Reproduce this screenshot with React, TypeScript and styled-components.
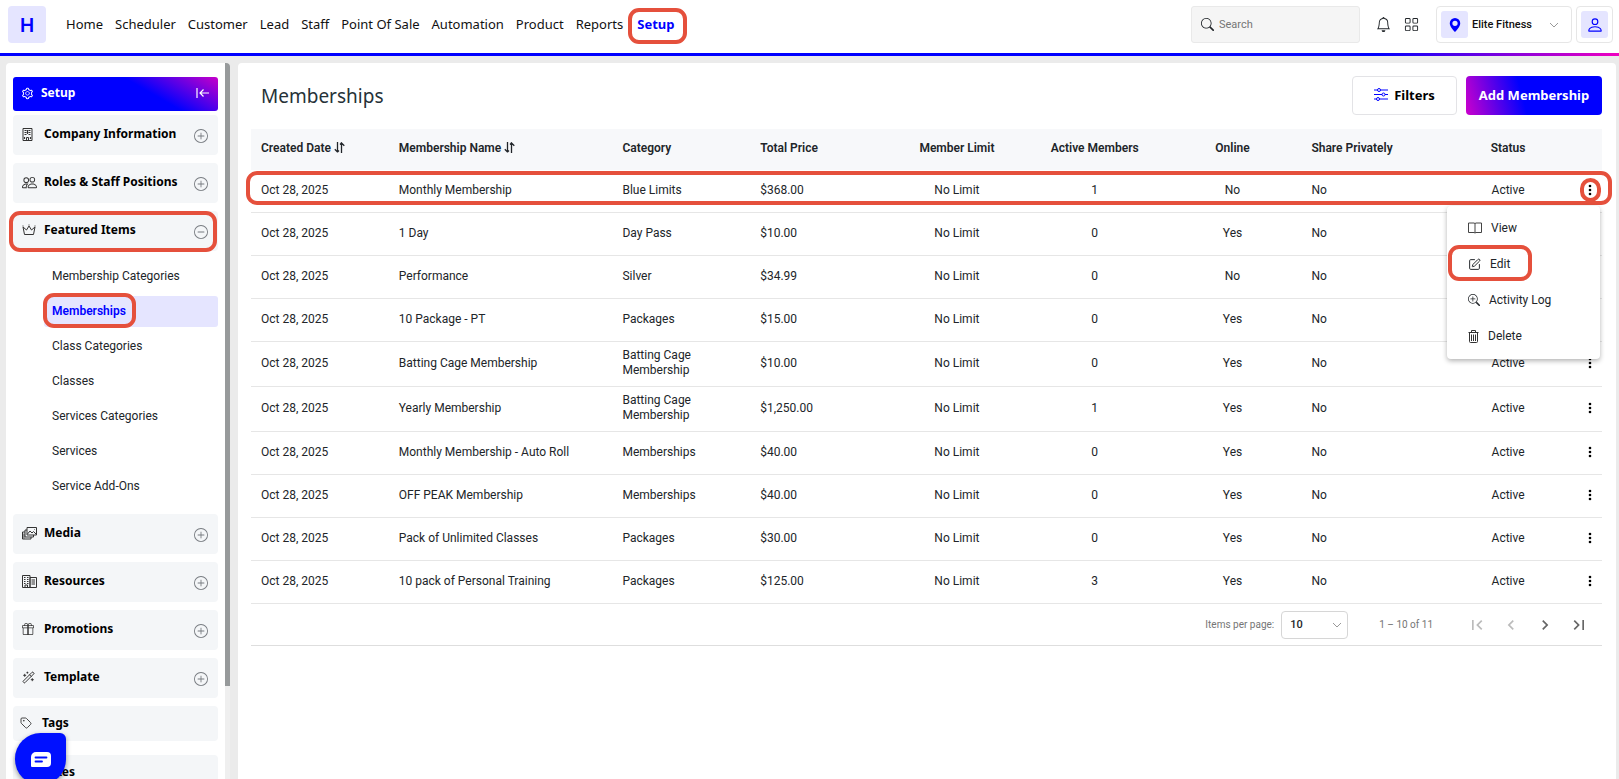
import React from 'react';
import styled, { createGlobalStyle, css } from 'styled-components';
import {
  BsPeople, BsGift, BsSearch, BsBell, BsGrid, BsGeoAltFill, BsPerson, BsZoomIn, BsPlusCircle, BsDashCircle,
} from 'react-icons/bs';
import { AiOutlineSetting } from 'react-icons/ai';
import { MdFirstPage, MdLastPage, MdChevronLeft, MdChevronRight } from 'react-icons/md';
import { SquarePen, Tag, WandSparkles } from 'lucide-react';

const roboto = "Roboto, 'Liberation Sans', sans-serif";
const display = "'Noto Sans', 'Open Sans', sans-serif";
const blue = '#0000ff';

const Global = createGlobalStyle`
  * { box-sizing: border-box; }
  html, body, #root { height: 100%; }
  body { margin: 0; font: 13px/18px ${roboto}; color: #212529; background: #ebebeb; overflow: hidden; }
  button, input, select { font: inherit; color: inherit; }
  button { border: 0; padding: 0; background: none; cursor: pointer; }
  a { color: inherit; text-decoration: none; }
  svg { flex: none; }
`;

const outline = css<{ $mark?: string }>`
  ${p => p.$mark && css`
    &::after {
      content: '';
      position: absolute;
      inset: ${p.$mark};
      border: 4px solid #e5503c;
      border-radius: 11px;
      pointer-events: none;
      z-index: 2;
    }
  `}
`;
const marked = css<{ $mark?: string }>`
  position: relative;
  ${outline}
`;

const Page = styled.div`display: flex; flex-direction: column; height: 100vh;`;
const Header = styled.header`
  display: flex;
  align-items: flex-start;
  flex: none;
  height: 56px;
  padding: 6px 6px 0 8px;
  background: linear-gradient(90deg, ${blue} 85%, #f000c0) bottom / 100% 3px no-repeat, #fff;
`;
const Logo = styled.a`
  display: grid;
  place-items: center;
  width: 38px;
  height: 37px;
  border-radius: 4px;
  background: #e5e5ff;
  color: ${blue};
  font: 600 20px/24px ${display};
`;
const Nav = styled.nav`display: flex; gap: 12px; margin: 8px auto 0 20px; font: 13px/20px ${display}; color: #111;`;
const NavLink = styled.a<{ $active?: boolean; $mark?: string }>`
  ${marked}
  ${p => p.$active && css`color: ${blue}; font-weight: 700; margin-left: 2px;`}
`;
const SearchBox = styled.label`
  display: flex;
  align-items: center;
  gap: 5px;
  width: 169px;
  height: 37px;
  padding: 0 9px;
  border: 1px solid #e9e9e9;
  border-radius: 3px;
  background: #f5f5f5;
  input { width: 100%; border: 0; padding: 0; outline: 0; background: none; font-size: 11px; }
  input::placeholder { color: #757575; }
`;
const IconButtons = styled.div`display: flex; align-items: center; gap: 13px; height: 37px; margin: 0 17px 0 16px;
  button { display: flex; }`;
const Framed = styled.button`
  display: flex;
  align-items: center;
  height: 37px;
  padding: 4px;
  border: 1px solid #e6e6e6;
  border-radius: 4px;
  background: #fff;
`;
const Location = styled(Framed)`width: 136px; margin-right: 4px; font-size: 11px; font-weight: 500; color: #111;
  > :last-child { margin: 0 8px 0 auto; }`;
const Tile = styled.span`
  display: grid;
  place-items: center;
  width: 27px;
  height: 27px;
  border-radius: 3px;
  background: #e5e5ff;
  color: ${blue};
`;
const PinTile = styled(Tile)`margin-right: 4px;`;

const Body = styled.div`display: flex; flex: 1; min-height: 0; padding: 7px 3px 0 6px; gap: 8px;`;
const Sidebar = styled.aside`
  display: flex;
  flex: none;
  width: 224px;
  border-radius: 4px 4px 0 0;
  background: #fff;
  overflow: hidden;
`;
const SideList = styled.div`display: flex; flex-direction: column; gap: 8px; flex: 1; padding: 14px 7px 0;`;
const Track = styled.div`width: 5px; background: #efefef;`;
const Thumb = styled.div`height: 87%; background: #979a9b;`;
const SideTitle = styled.div`
  display: flex;
  flex: none;
  align-items: center;
  gap: 7px;
  height: 34px;
  margin-bottom: -4px;
  padding: 0 8px 2px;
  border-radius: 3px;
  background: linear-gradient(30deg, ${blue} 64%, #c800c8);
  color: #fff;
  font: 700 12px/16px ${display};
  button { margin-left: auto; display: flex; }
`;
const Section = styled.button<{ $mark?: string; $short?: boolean }>`
  ${marked}
  display: flex;
  flex: none;
  align-items: center;
  height: ${p => (p.$short ? 35 : 40)}px;
  margin-bottom: ${p => (p.$short ? 6 : 0)}px;
  padding: 0 10px 2px ${p => (p.$short ? 7 : 9)}px;
  border-radius: 4px;
  background: #f4f6f8;
  color: #000;
  font: 700 12px/16px ${display};
  text-align: left;
`;
const SectionIcon = styled.span`display: flex; width: 22px; color: #333;`;
const Toggle = styled.span`display: flex; margin: 4px 0 0 auto; color: #777b80;`;
const SubList = styled.div`display: flex; flex-direction: column; gap: 4px; padding: 2px 0 4px 31px;`;
const SubItem = styled.a<{ $active?: boolean }>`
  padding: 6px 8px 7px;
  border-radius: 3px;
  color: #212529;
  font-size: 12px;
  ${p => p.$active && css`background: #e5e5ff; color: ${blue}; font-weight: 600;`}
`;
const Marked = styled.span<{ $mark?: string }>`${marked} display: inline-block;`;

const Main = styled.main`flex: 1; min-width: 0; padding: 13px 14px 0 13px; border-radius: 4px 4px 0 0; background: #fff;`;
const TitleRow = styled.div`display: flex; gap: 9px; align-items: center; margin-bottom: 14px;
  h1 { margin: 0 auto 0 10px; font: 400 19px/24px ${display}; color: #263238; }`;
const FilterButton = styled.button`
  display: flex;
  align-items: center;
  justify-content: center;
  gap: 6px;
  width: 105px;
  height: 39px;
  padding-bottom: 2px;
  border: 1px solid #e3e3e6;
  border-radius: 4px;
  color: #000;
  font: 700 13px/18px ${display};
`;
const AddButton = styled(FilterButton)`
  width: 136px;
  border: 0;
  background: linear-gradient(75deg, #cc00cc, ${blue} 42%);
  color: #fff;
`;

const Table = styled.table`
  width: 100%;
  table-layout: fixed;
  border-collapse: separate;
  border-spacing: 0;
  font-size: 12px;
  line-height: 15px;
`;
const Th = styled.th<{ $center?: boolean; $width?: string }>`
  width: ${p => p.$width ?? 'auto'};
  height: 41px;
  padding: 0 10px 2px;
  background: #f7f8fa;
  color: #212529;
  font-weight: 600;
  text-align: ${p => (p.$center ? 'center' : 'left')};
  white-space: nowrap;
  svg { vertical-align: -1px; margin-left: 3px; }
`;
const Tr = styled.tr`position: relative;`;
const Td = styled.td<{ $center?: boolean; $mark?: string }>`
  height: 43px;
  padding: 6px 10px 8px;
  border-bottom: 1px solid #e6e6e6;
  text-align: ${p => (p.$center ? 'center' : 'left')};
  ${outline}
`;
const MenuCell = styled(Td)`padding: 0 0 2px; position: relative;`;
const DotsButton = styled.button<{ $mark?: string }>`${marked} display: inline-flex; vertical-align: middle;`;
const Menu = styled.div`
  position: absolute;
  top: 36px;
  right: 2px;
  z-index: 3;
  display: flex;
  flex-direction: column;
  width: 153px;
  padding: 4px 0 5px;
  border-radius: 4px;
  background: #fff;
  box-shadow: 0 2px 5px rgba(0, 0, 0, 0.3);
`;
const MenuItem = styled.button<{ $mark?: string }>`
  ${marked}
  display: flex;
  align-items: center;
  gap: 9px;
  height: 36px;
  padding: 0 21px;
  font-size: 12px;
`;

const Paginator = styled.div`
  display: flex;
  align-items: center;
  justify-content: flex-end;
  height: 42px;
  padding-right: 13px;
  border-bottom: 1px solid #dedede;
  color: #757575;
  font-size: 10px;
  label { display: flex; align-items: center; gap: 7px; }
`;
const SelectWrap = styled.span`
  position: relative;
  display: flex;
  select {
    appearance: none;
    width: 67px;
    height: 28px;
    padding: 0 8px;
    border: 1px solid #d6d6d6;
    border-radius: 4px;
    background: #fff;
    color: #212529;
    font-size: 11px;
    font-weight: 500;
  }
  svg { position: absolute; right: 6px; top: 9px; }
`;
const Range = styled.span`margin: 0 34px 0 31px;`;
const Pager = styled.div`display: flex; gap: 14px; color: #666;
  button { display: flex; }
  button:disabled { color: #bbb; }`;

const Chat = styled.button`
  position: fixed;
  left: 15px;
  bottom: -6px;
  z-index: 5;
  display: grid;
  place-items: center;
  width: 51px;
  height: 52px;
  border-radius: 26px 6px 26px 26px;
  background: #0010ff;
  box-shadow: 0 2px 5px rgba(0, 0, 0, 0.4);
`;

const Chevron = () => (
  <svg width="10" height="10" viewBox="0 0 10 10" fill="none" stroke="#999"><path d="M1 3l4 4 4-4" /></svg>
);
const Crown = () => (
  <svg width="14" height="12" viewBox="0 0 14 12" fill="none" stroke="currentColor" strokeLinejoin="round">
    <path d="M2.500 10.500L1 3l3.500 3L7 2l2.500 4L13 3l-1.500 7.500zM.5 2h1M12.500 2h1M6.500 1h1" />
  </svg>
);
const Tower = () => (
  <svg width="11" height="13" viewBox="0 0 11 13" fill="none" stroke="currentColor">
    <path d="M1 .5h9v12H1zM4.500 12V9.500h2V12" />
    <path d="M2.500 2.500h2M6.500 2.500h2M2.500 4.500h2M6.500 4.500h2M2.500 6.500h2M6.500 6.500h2M5.500 2v4M2.500 9v2M8.500 9v2" strokeWidth="1.200" />
  </svg>
);
const TwinTowers = () => (
  <svg width="15" height="13" viewBox="0 0 15 13" fill="none" stroke="currentColor">
    <path d="M.5 .5h7.500v12H.5zM8 2.500h6.500v10H8zM3 12.500V10h2.500v2.500" />
    <path d="M2 2.500h1.500M5 2.500h1.500M2 4.500h1.500M5 4.500h1.500M2 6.500h1.500M5 6.500h1.500M2 8.500h1.500M5 8.500h1.500M9.500 5h3.500M9.500 7h3.500M9.500 9h3.500" />
  </svg>
);
const MediaStack = () => (
  <svg width="15" height="13" viewBox="0 0 15 13" fill="none" stroke="currentColor">
    <path d="M5 .5h9.500V8H5zM5.500 7l2.500-3 2 2 1.500-1.500L14 7M12 2.500h.5" />
    <path d="M5 3H3v7h8.500V8M3 5H.5v7H9v-2M2 6.500v5" />
  </svg>
);
const Sliders = () => (
  <svg width="14" height="13" viewBox="0 0 14 13" fill="#fff" stroke={blue}>
    <path d="M0 2h14M0 6.500h14M0 11h14" />
    <circle cx="5" cy="2" r="1.500" /><circle cx="9.500" cy="6.500" r="1.500" /><circle cx="4" cy="11" r="1.500" />
  </svg>
);
const OpenBook = () => (
  <svg width="14" height="12" viewBox="0 0 14 12" fill="none" stroke="#444" strokeLinejoin="round">
    <path d="M.5 1H6l1 .5L8 1h5.500v9.500H8l-1 .5-1-.5H.5zM7 1.500V11" />
  </svg>
);
const Bin = () => (
  <svg width="11" height="13" viewBox="0 0 11 13" fill="none" stroke="#333">
    <path d="M.5 2.500h10M3.500 2.500v-2h4v2M1.500 2.500v9a1 1 0 0 0 1 1h6a1 1 0 0 0 1-1v-9M3.500 4.500V11M5.500 4.500V11M7.500 4.500V11" />
  </svg>
);
const Collapse = () => (
  <svg width="14" height="12" viewBox="0 0 14 12" fill="none" stroke="#fff" strokeWidth="1.200">
    <path d="M1 1v10M13 6H4M7.500 2.500L4 6l3.500 3.500" />
  </svg>
);
const Sort = () => (
  <svg width="11" height="11" viewBox="0 0 11 11" fill="none" stroke="#212529" strokeWidth="1.300">
    <path d="M3.500 0v10M.8 7.300L3.500 10M7.500 11V1L10.300 3.800M3.500 10l1.500-1.500M7.500 1L6 2.500" />
  </svg>
);
const Dots = () => (
  <svg width="4" height="12" viewBox="0 0 4 12"><circle cx="2" cy="2" r="1.300" /><circle cx="2" cy="6" r="1.300" /><circle cx="2" cy="10" r="1.300" /></svg>
);
const ChatGlyph = () => (
  <svg width="20" height="15" viewBox="0 0 20 15">
    <path fill="#fff" d="M5 0h11a4 4 0 0 1 4 4v7a4 4 0 0 1-4 4H1a1 1 0 0 1-1-1V5a5 5 0 0 1 5-5z" />
    <path stroke="#0010ff" strokeWidth="1.800" strokeLinecap="round" d="M4.500 5.500h11M4.500 9.500h6.500" />
  </svg>
);

const navItems = ['Home', 'Scheduler', 'Customer', 'Lead', 'Staff', 'Point Of Sale', 'Automation', 'Product', 'Reports'];
const subItems = ['Membership Categories', 'Memberships', 'Class Categories', 'Classes', 'Services Categories', 'Services', 'Service Add-Ons'];
const rows = [
  ['Monthly Membership', 'Blue Limits', '$368.00', '1', 'No'],
  ['1 Day', 'Day Pass', '$10.00', '0', 'Yes'],
  ['Performance', 'Silver', '$34.99', '0', 'No'],
  ['10 Package - PT', 'Packages', '$15.00', '0', 'Yes'],
  ['Batting Cage Membership', 'Batting Cage Membership', '$10.00', '0', 'Yes'],
  ['Yearly Membership', 'Batting Cage Membership', '$1,250.00', '1', 'Yes'],
  ['Monthly Membership - Auto Roll', 'Memberships', '$40.00', '0', 'Yes'],
  ['OFF PEAK Membership', 'Memberships', '$40.00', '0', 'Yes'],
  ['Pack of Unlimited Classes', 'Packages', '$30.00', '0', 'Yes'],
  ['10 pack of Personal Training', 'Packages', '$125.00', '3', 'Yes'],
];

type SectionProps = { icon: React.ReactNode; label: string; open?: boolean; short?: boolean; mark?: string };
const SideSection = ({ icon, label, open, short, mark }: SectionProps) => (
  <Section $mark={mark} $short={short}>
    <SectionIcon>{icon}</SectionIcon>
    {label}
    {!short && <Toggle>{open ? <BsDashCircle size={14} /> : <BsPlusCircle size={14} />}</Toggle>}
  </Section>
);

const RowMenu = () => (
  <Menu>
    <MenuItem><OpenBook />View</MenuItem>
    <MenuItem $mark="-1px 68px 1px 1px"><SquarePen size={13} strokeWidth={1.8} />Edit</MenuItem>
    <MenuItem><BsZoomIn size={12} />Activity Log</MenuItem>
    <MenuItem><Bin />Delete</MenuItem>
  </Menu>
);

export default function App() {
  return (
    <Page>
      <Global />
      <Header>
        <Logo href="#">H</Logo>
        <Nav>
          {navItems.map(n => <NavLink key={n} href="#">{n}</NavLink>)}
          <NavLink href="#" $active $mark="-6px -13px -10px -9px">Setup</NavLink>
        </Nav>
        <SearchBox><BsSearch size={13} /><input placeholder="Search" aria-label="Search" /></SearchBox>
        <IconButtons>
          <button aria-label="Notifications"><BsBell size={15} /></button>
          <button aria-label="Apps"><BsGrid size={15} /></button>
        </IconButtons>
        <Location>
          <PinTile><BsGeoAltFill size={14} /></PinTile>
          Elite Fitness
          <Chevron />
        </Location>
        <Framed aria-label="Profile"><Tile><BsPerson size={18} /></Tile></Framed>
      </Header>
      <Body>
        <Sidebar>
          <SideList>
            <SideTitle><AiOutlineSetting size={13} />Setup<button aria-label="Collapse"><Collapse /></button></SideTitle>
            <SideSection icon={<Tower />} label="Company Information" />
            <SideSection icon={<BsPeople size={15} />} label="Roles & Staff Positions" />
            <SideSection icon={<Crown />} label="Featured Items" open mark="0 1px -1px -4px" />
            <SubList>
              {subItems.map(s => (
                <SubItem key={s} href="#" $active={s === 'Memberships'}>
                  <Marked $mark={s === 'Memberships' ? '-9px -10px -8px -9px' : undefined}>{s}</Marked>
                </SubItem>
              ))}
            </SubList>
            <SideSection icon={<MediaStack />} label="Media" />
            <SideSection icon={<TwinTowers />} label="Resources" />
            <SideSection icon={<BsGift size={12} />} label="Promotions" />
            <SideSection icon={<WandSparkles size={13} strokeWidth={1.8} />} label="Template" />
            <SideSection icon={<Tag size={12} strokeWidth={1.8} />} label="Tags" short />
            <SideSection icon={<Tag size={12} strokeWidth={1.8} />} label="Taxes" short />
          </SideList>
          <Track><Thumb /></Track>
        </Sidebar>
        <Main>
          <TitleRow>
            <h1>Memberships</h1>
            <FilterButton><Sliders />Filters</FilterButton>
            <AddButton>Add Membership</AddButton>
          </TitleRow>
          <Table>
            <thead>
              <tr>
                <Th $width="10.2%">Created Date<Sort /></Th>
                <Th>Membership Name<Sort /></Th>
                <Th $width="10.2%">Category</Th>
                <Th $width="10.2%">Total Price</Th>
                <Th $width="10.2%" $center>Member Limit</Th>
                <Th $width="10.2%" $center>Active Members</Th>
                <Th $width="10.2%" $center>Online</Th>
                <Th $width="10.2%">Share Privately</Th>
                <Th $width="10.2%" $center>Status</Th>
                <Th $width="25px" aria-label="Actions" />
              </tr>
            </thead>
            <tbody>
              {rows.map(([name, category, price, members, online], i) => (
                <Tr key={name}>
                  <Td $mark={i === 0 ? '1px -10px 8px -5px' : undefined}>Oct 28, 2025</Td>
                  <Td>{name}</Td>
                  <Td>{category}</Td>
                  <Td>{price}</Td>
                  <Td $center>No Limit</Td>
                  <Td $center>{members}</Td>
                  <Td $center>{online}</Td>
                  <Td>No</Td>
                  <Td $center>Active</Td>
                  <MenuCell $center>
                    <DotsButton aria-label="Row actions" $mark={i === 0 ? '-6px -9px -6px -8px' : undefined}><Dots /></DotsButton>
                    {i === 0 && <RowMenu />}
                  </MenuCell>
                </Tr>
              ))}
            </tbody>
          </Table>
          <Paginator>
            <label>
              Items per page:
              <SelectWrap><select defaultValue="10"><option>10</option><option>25</option></select><Chevron /></SelectWrap>
            </label>
            <Range>1 – 10 of 11</Range>
            <Pager>
              <button disabled aria-label="First page"><MdFirstPage size={20} /></button>
              <button disabled aria-label="Previous page"><MdChevronLeft size={20} /></button>
              <button aria-label="Next page"><MdChevronRight size={20} /></button>
              <button aria-label="Last page"><MdLastPage size={20} /></button>
            </Pager>
          </Paginator>
        </Main>
      </Body>
      <Chat aria-label="Open chat"><ChatGlyph /></Chat>
    </Page>
  );
}
